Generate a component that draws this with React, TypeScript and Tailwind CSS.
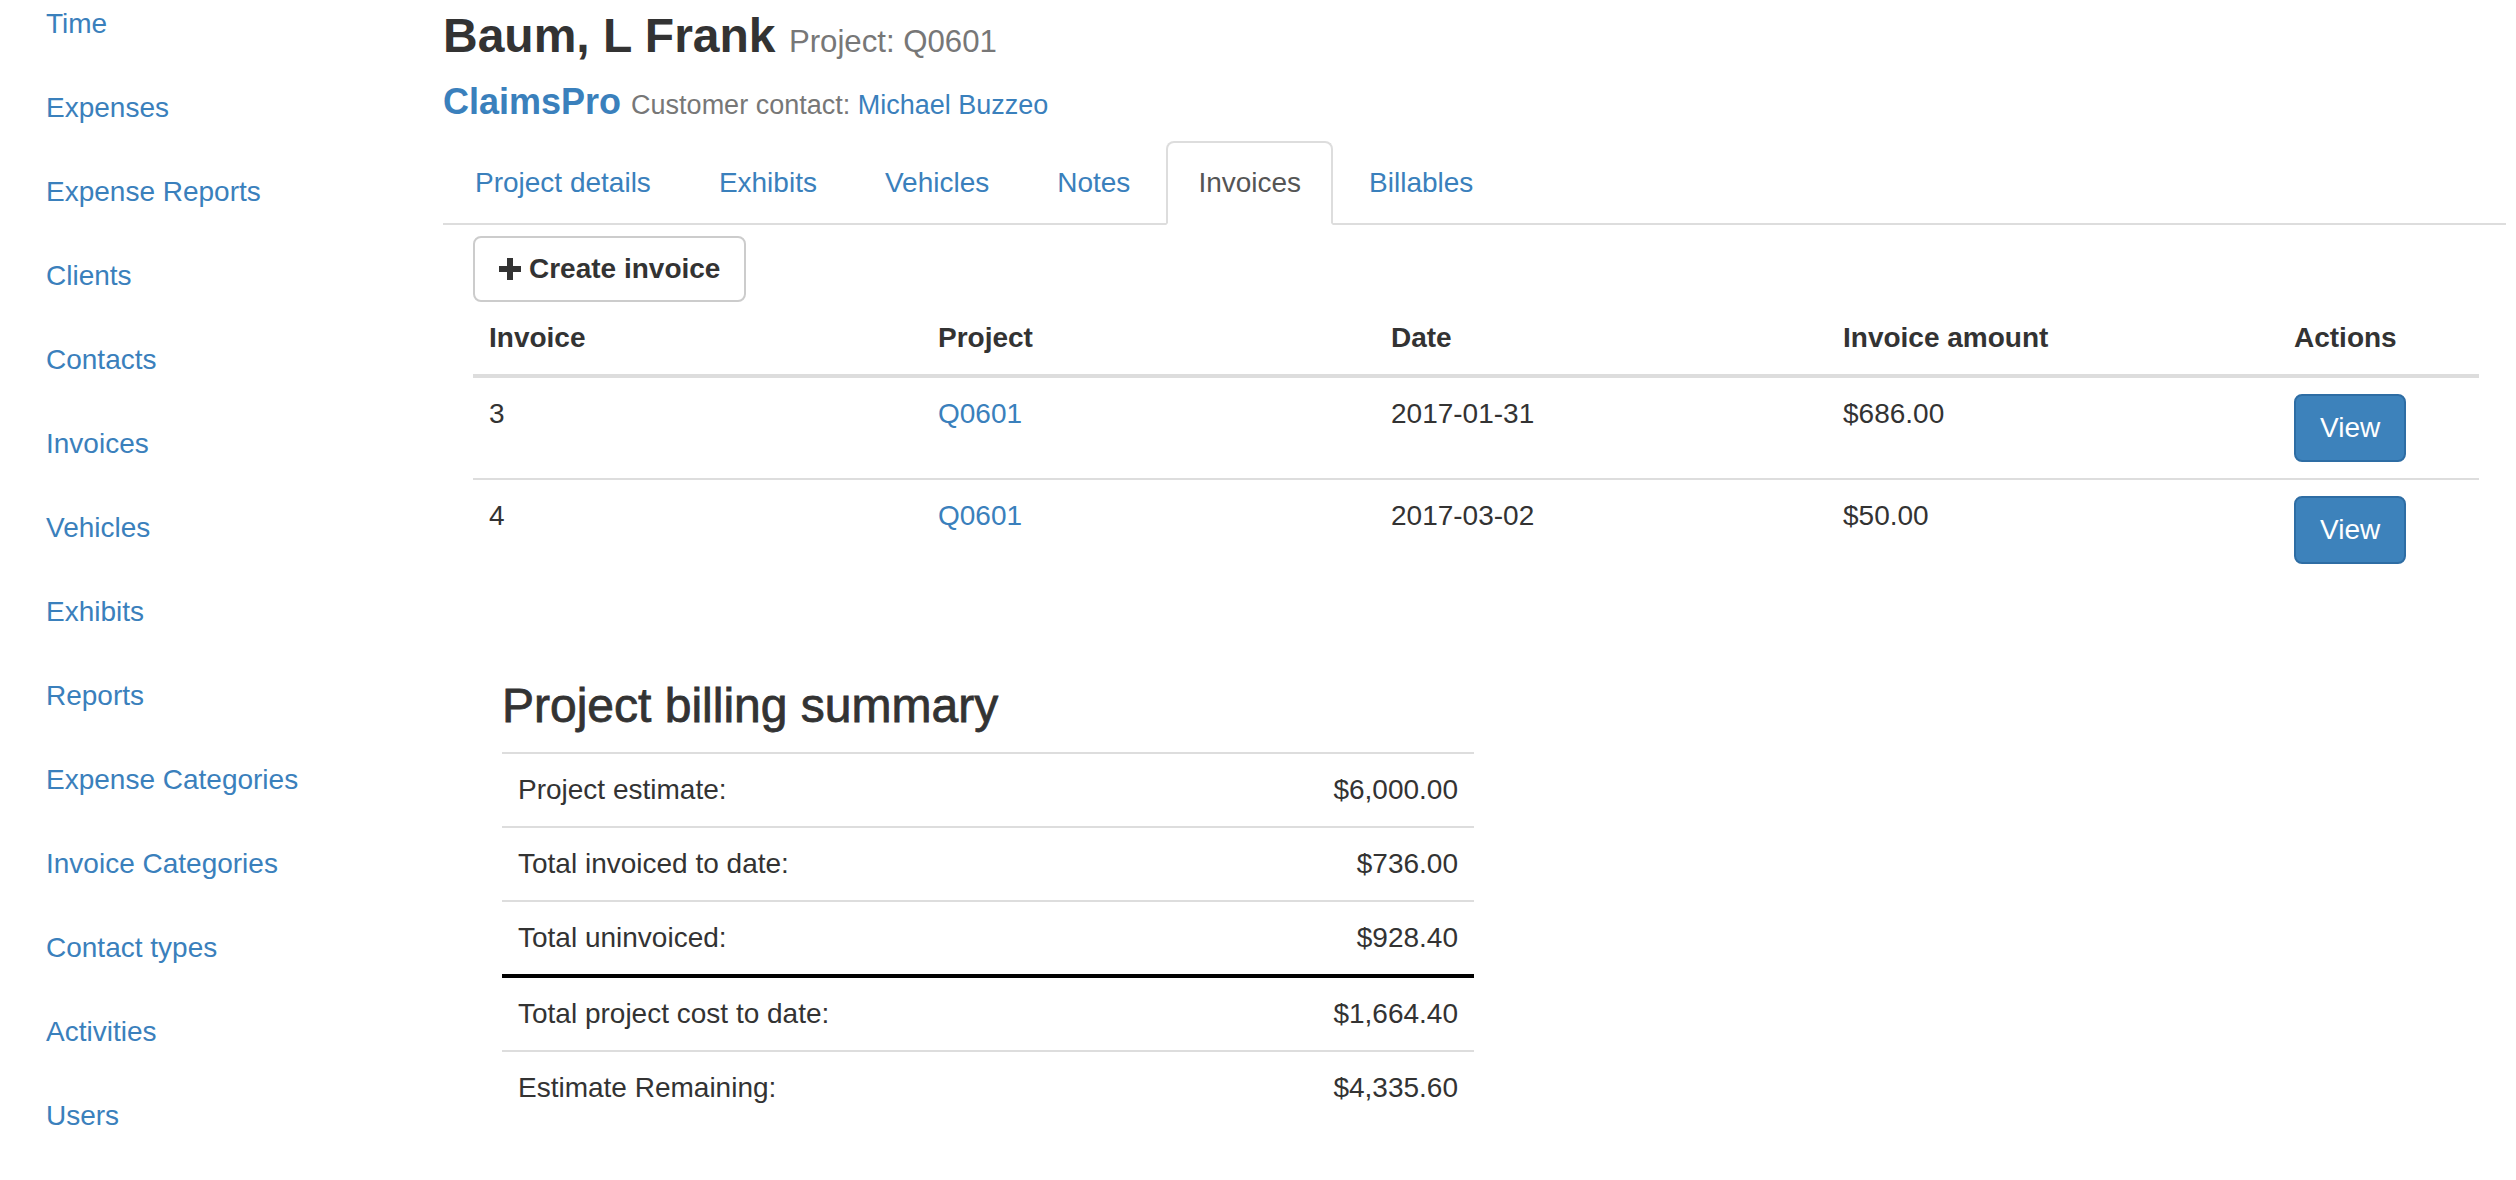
const navItems = [
  "Time",
  "Expenses",
  "Expense Reports",
  "Clients",
  "Contacts",
  "Invoices",
  "Vehicles",
  "Exhibits",
  "Reports",
  "Expense Categories",
  "Invoice Categories",
  "Contact types",
  "Activities",
  "Users",
];

const tabs = ["Project details", "Exhibits", "Vehicles", "Notes", "Invoices", "Billables"];

const invoices = [
  { id: "3", project: "Q0601", date: "2017-01-31", amount: "$686.00" },
  { id: "4", project: "Q0601", date: "2017-03-02", amount: "$50.00" },
];

const summary = [
  { label: "Project estimate:", value: "$6,000.00" },
  { label: "Total invoiced to date:", value: "$736.00" },
  { label: "Total uninvoiced:", value: "$928.40" },
  { label: "Total project cost to date:", value: "$1,664.40", total: true },
  { label: "Estimate Remaining:", value: "$4,335.60" },
];

const PlusIcon = () => (
  <svg width="22" height="22" viewBox="0 0 22 22" className="mr-[8px] shrink-0" fill="#333">
    <rect x="8" y="0" width="6" height="22" />
    <rect x="0" y="8" width="22" height="6" />
  </svg>
);

const App = () => {
  return (
    <div className="flex min-h-[1180px] bg-white text-[#333] font-['Liberation_Sans',Arial,sans-serif]">
      {/* side nav */}
      <aside className="w-[443px] shrink-0 pl-[46px] pt-[4px]">
        <ul className="flex flex-col gap-[44px]">
          {navItems.map((item) => (
            <li key={item}>
              <a href="#" className="block text-[28px] leading-[40px] text-[#3a80bc]">
                {item}
              </a>
            </li>
          ))}
        </ul>
      </aside>

      <main className="w-[2063px] pt-[10px]">
        <h3 className="text-[48px] leading-[52.8px] font-bold">
          Baum, L Frank{" "}
          <small className="text-[31.2px] leading-none font-normal text-[#777]">Project: Q0601</small>
        </h3>
        <h4 className="mt-[19px] text-[36px] leading-[39.6px] font-bold">
          <a href="#" className="text-[#3a80bc]">
            ClaimsPro
          </a>{" "}
          <small className="text-[27px] leading-none font-normal text-[#777]">
            Customer contact:{" "}
            <a href="#" className="text-[#3a80bc]">
              Michael Buzzeo
            </a>
          </small>
        </h4>

        {/* tabs */}
        <ul className="mt-[20px] flex border-b-2 border-[#ddd]">
          {tabs.map((tab) => {
            const active = tab === "Invoices";
            return (
              <li key={tab} className="-mb-[2px]">
                <a
                  href="#"
                  className={
                    active
                      ? "mr-[4px] block rounded-t-[8px] border-2 border-[#ddd] border-b-white bg-white px-[30px] py-[20px] text-[28px] leading-[40px] text-[#555]"
                      : "mr-[4px] block rounded-t-[8px] border-2 border-transparent px-[30px] py-[20px] text-[28px] leading-[40px] text-[#3a80bc]"
                  }
                >
                  {tab}
                </a>
              </li>
            );
          })}
        </ul>

        <div className="pl-[30px] pr-[27px]">
          <button className="mt-[11px] inline-flex items-center rounded-[8px] border-2 border-[#ccc] bg-white px-[24px] py-[11px] text-[28px] leading-[40px] font-bold text-[#333]">
            <PlusIcon />
            Create invoice
          </button>

          <table className="w-full table-fixed border-collapse text-[28px] leading-[40px]">
            <thead>
              <tr>
                <th className="w-[449px] border-b-4 border-[#ddd] px-4 py-4 text-left align-bottom font-bold">Invoice</th>
                <th className="w-[453px] border-b-4 border-[#ddd] px-4 py-4 text-left align-bottom font-bold">Project</th>
                <th className="w-[452px] border-b-4 border-[#ddd] px-4 py-4 text-left align-bottom font-bold">Date</th>
                <th className="w-[451px] border-b-4 border-[#ddd] px-4 py-4 text-left align-bottom font-bold">Invoice amount</th>
                <th className="border-b-4 border-[#ddd] px-4 py-4 text-left align-bottom font-bold">Actions</th>
              </tr>
            </thead>
            <tbody>
              {invoices.map((inv) => (
                <tr key={inv.id}>
                  <td className="border-t-2 border-[#ddd] px-4 py-4 align-top">{inv.id}</td>
                  <td className="border-t-2 border-[#ddd] px-4 py-4 align-top">
                    <a href="#" className="text-[#3a80bc]">
                      {inv.project}
                    </a>
                  </td>
                  <td className="border-t-2 border-[#ddd] px-4 py-4 align-top">{inv.date}</td>
                  <td className="border-t-2 border-[#ddd] px-4 py-4 align-top">{inv.amount}</td>
                  <td className="border-t-2 border-[#ddd] px-4 py-4 align-top">
                    <button className="rounded-[8px] border-2 border-[#2e6da4] bg-[#3d82bb] px-[24px] py-[12px] text-[28px] leading-[40px] text-white">
                      View
                    </button>
                  </td>
                </tr>
              ))}
            </tbody>
          </table>

          {/* billing summary */}
          <div className="mt-[100px] w-[1001px] pl-[29px]">
            <h3 className="mb-[19px] text-[48px] leading-[52.8px] font-medium [-webkit-text-stroke:0.8px_#333]">
              Project billing summary
            </h3>
            <div className="text-[28px] leading-[40px]">
              {summary.map((row) => (
                <div
                  key={row.label}
                  className={
                    row.total
                      ? "flex justify-between border-t-4 border-black px-4 py-4"
                      : "flex justify-between border-t-2 border-[#ddd] px-4 py-4"
                  }
                >
                  <span>{row.label}</span>
                  <span>{row.value}</span>
                </div>
              ))}
            </div>
          </div>
        </div>
      </main>
    </div>
  );
};

export default App;
